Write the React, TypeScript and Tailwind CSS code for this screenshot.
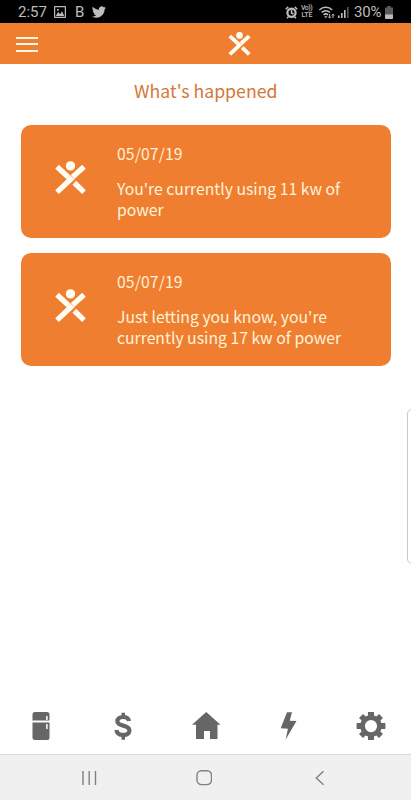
import type { ReactNode } from 'react'

interface Notice {
  date: string
  message: string
}

const notices: Notice[] = [
  { date: '05/07/19', message: "You're currently using 11 kw of power" },
  { date: '05/07/19', message: "Just letting you know, you're currently using 17 kw of power" },
]

function Logo({ className }: { className: string }) {
  return (
    <svg viewBox="0 0 93 100" className={className} fill="none" stroke="#fffdf3" strokeWidth="16">
      <circle cx="46.5" cy="14.5" r="14" fill="#fffdf3" stroke="none" />
      <path d="M6 17 47 54.5 6 93" />
      <path d="M87 17 53 48M87 93 58 65" />
    </svg>
  )
}

function StatusBar() {
  return (
    <div className="flex h-[23px] shrink-0 items-center bg-black pl-[18px] pr-[18px] pt-px text-[#bdbdbd]">
      <span className="w-[29px] whitespace-nowrap font-['Roboto'] text-[15px] leading-[22px]">2:57</span>
      <svg className="ml-[7px] h-3 w-3" viewBox="0 0 12 12">
        <path fill="currentColor" fillRule="evenodd" d="M1 0h10a1 1 0 0 1 1 1v10a1 1 0 0 1-1 1H1a1 1 0 0 1-1-1V1a1 1 0 0 1 1-1ZM1.2 1.2v9.6h9.6V1.2ZM1.8 10l2.4-4 2 2.2L8 5.2 10.3 10ZM3 3h1.8v1.6H3Z" />
      </svg>
      <span className="ml-[9px] w-[9px] font-['Roboto'] text-[15px] leading-[22px]">B</span>
      <svg className="ml-[8px] h-3.5 w-3.5" viewBox="0 0 24 24" fill="currentColor">
        <path d="M23.95 4.57a10 10 0 0 1-2.82.78 4.96 4.96 0 0 0 2.16-2.73c-.95.56-2 .96-3.13 1.19a4.92 4.92 0 0 0-8.38 4.48C7.69 8.1 4.07 6.13 1.64 3.16a4.93 4.93 0 0 0 1.52 6.57 4.9 4.9 0 0 1-2.23-.61v.06a4.92 4.92 0 0 0 3.95 4.83 5 5 0 0 1-2.21.08 4.94 4.94 0 0 0 4.6 3.42A9.87 9.87 0 0 1 0 19.54a13.99 13.99 0 0 0 7.55 2.21c9.05 0 14-7.5 14-13.98 0-.21 0-.42-.02-.63a9.9 9.9 0 0 0 2.46-2.55Z" />
      </svg>

      <svg className="ml-auto h-[13px] w-[13px]" viewBox="0 0 13 13" fill="none" stroke="currentColor">
        <circle cx="6.5" cy="6.7" r="4.1" strokeWidth="2.2" />
        <path strokeWidth="1.5" d="M6.5 4v3l2 1M.7 3.2 3.3.9M12.3 3.2 9.7.9M2 12.3l1.4-1.5M11 12.3l-1.4-1.5" />
      </svg>
      <div className="ml-[3px] w-3 text-center font-['Roboto'] text-[7px] font-medium leading-[7px]">
        <div className="-ml-px whitespace-nowrap tracking-[-0.5px]">Vo))</div>
        <div>LTE</div>
      </div>
      <svg className="ml-[6px] h-[13px] w-4" viewBox="0 0 16 13" fill="none" stroke="currentColor" strokeWidth="1.5">
        <path d="M.4 4a9 9 0 0 1 12.8 0M2.6 6.5a6 6 0 0 1 8.4 0M4.6 8.9a3.2 3.2 0 0 1 4.4 0" />
        <path fill="currentColor" stroke="none" d="M5.2 10.2h3.2L6.8 12.2Z" />
        <path strokeWidth="1" d="M10.6 8v4M9.4 10.7l1.2 1.4 1.2-1.4M14 12V8.2M12.8 9.5 14 8.1l1.2 1.4" />
      </svg>
      <svg className="ml-[3px] h-3 w-[11px]" viewBox="0 0 11 12" fill="currentColor">
        <path d="M0 9.5h1.6V12H0ZM3 7h1.6v5H3ZM6 4h1.6v8H6Z" />
        <path fill="#555" d="M9 1h1.6v11H9Z" />
      </svg>
      <span className="ml-[5px] w-[27px] whitespace-nowrap font-['Roboto'] text-[15px] leading-[22px] tracking-[-0.2px]">30%</span>
      <svg className="ml-[4px] h-[13px] w-[8px]" viewBox="0 0 8 13">
        <path fill="#5a5a5a" d="M2.2 0h3.6v1.5H8V9H0V1.5h2.2Z" />
        <path fill="#bdbdbd" d="M0 8.5h8V12a1 1 0 0 1-1 1H1a1 1 0 0 1-1-1Z" />
      </svg>
    </div>
  )
}

function Header() {
  return (
    <header className="flex h-[41px] shrink-0 items-center bg-[#ef7e31] pl-4">
      <button aria-label="Menu" className="mt-px flex w-[22px] flex-col gap-[4.5px]">
        <span className="h-0.5 bg-[#fff8e4]" />
        <span className="h-0.5 bg-[#fff8e4]" />
        <span className="h-0.5 bg-[#fff8e4]" />
      </button>
      <Logo className="ml-[190px] h-6 w-[23px]" />
    </header>
  )
}

function NoticeCard({ date, message }: Notice) {
  return (
    <article className="flex h-[113px] rounded-[10px] bg-[#ef7e31] font-['Noto_Sans_CJK_SC',sans-serif] text-[#fff3d8]">
      <Logo className="ml-[34.5px] mt-9 h-[33.5px] w-[31px] shrink-0" />
      <div className="ml-[31px] mt-[18px] w-[235px] text-[15.75px] leading-[21px]">
        <p className="tracking-[0.1px]">{date}</p>
        <p className="mt-3.5">{message}</p>
      </div>
    </article>
  )
}

function TabItem({ label, className, children }: { label: string; className: string; children: ReactNode }) {
  return (
    <button aria-label={label} className="flex flex-1 justify-center">
      <svg viewBox="0 0 30 30" className={className} fill="#666">
        {children}
      </svg>
    </button>
  )
}

function TabBar() {
  return (
    <nav className="flex h-[43px] shrink-0">
      <TabItem label="Appliances" className="h-[30px] w-[30px]">
        <path d="M9 1h12a2.5 2.5 0 0 1 2.5 2.5V9.5h-17V3.5A2.5 2.5 0 0 1 9 1ZM6.5 11.5h17v15a2.5 2.5 0 0 1-2.5 2.5H9A2.5 2.5 0 0 1 6.5 26.5Z" />
        <path fill="#eee" d="M20 5H21.7V9H20ZM20 13H21.7V18H20Z" />
      </TabItem>
      <TabItem label="Costs" className="h-[30px] w-[30px]">
        <path fill="none" stroke="#666" strokeWidth="4.2" d="M21 10C20.5 7 18.5 6 15.2 6c-3.8 0-5.8 1.7-5.8 4.2 0 6 12 2.8 12 9.2 0 3-2.3 4.5-6.2 4.5-4.2 0-6.4-1.7-6.8-5" />
        <path d="M13.5 1.8h3.5v5h-3.5ZM13.5 23.5h3.5v5.2h-3.5Z" />
      </TabItem>
      <TabItem label="Home" className="h-[30px] w-[30px]">
        <path d="M15.2 1 29.5 13.7H26.5V28H19V20h-6v8H5V13.7H1Z" />
      </TabItem>
      <TabItem label="Energy" className="h-[30px] w-[30px]">
        <path d="M14 1.2H19L16.7 9.7 23.5 10 12.7 28.5 14.9 17.7 7.7 17.2Z" />
      </TabItem>
      <TabItem label="Settings" className="ml-0.5 h-[30px] w-[30px]">
        <path
          fillRule="evenodd"
          d="M12 1h6v3.6l2.4 1 2.6-2.6 4 4-2.6 2.6 1 2.5h4v6h-4l-1 2.4 2.6 2.6-4 4-2.6-2.6-2.4 1V29h-6v-3.5l-2.4-1L7 27.1l-4-4 2.6-2.6-1-2.4H.6v-6h4l1-2.5L3 7l4-4 2.6 2.6 2.4-1ZM15 9a6.1 6.1 0 1 0 0 12.2A6.1 6.1 0 0 0 15 9Z"
        />
      </TabItem>
    </nav>
  )
}

function SystemNav() {
  return (
    <div className="flex h-[46px] shrink-0 items-center border-t border-[#dadada] bg-[#f0f0f0] pl-[81px] text-[#808080]">
      <svg className="h-4 w-4" viewBox="0 0 16 16" stroke="currentColor" strokeWidth="1.4">
        <path d="M2 1v14M8.2 1v14M14.5 1v14" />
      </svg>
      <svg className="ml-[99px] h-4 w-4" viewBox="0 0 16 16" fill="none" stroke="currentColor" strokeWidth="1.4">
        <rect x="1" y=".8" width="14.5" height="13.8" rx="4.5" />
      </svg>
      <svg className="ml-[103px] h-4 w-[9px]" viewBox="0 0 9 16" fill="none" stroke="currentColor" strokeWidth="1.4">
        <path d="M8.5 1.3 1.3 8l7.2 6.7" />
      </svg>
    </div>
  )
}

export default function App() {
  return (
    <div className="relative flex h-[800px] w-[411px] flex-col overflow-hidden bg-[#fefefe]">
      <StatusBar />
      <Header />
      <main className="flex-1 pl-[20.5px] pr-5">
        <h1 className="mt-3 text-center font-['Noto_Sans_CJK_SC',sans-serif] text-[17.7px] leading-7 text-[#d47837]">
          What's happened
        </h1>
        <div className="mt-[21px] flex flex-col gap-[15px]">
          {notices.map((notice) => (
            <NoticeCard key={notice.message} {...notice} />
          ))}
        </div>
      </main>
      {/* Edge panel handle over the page */}
      <div className="absolute -right-2 top-[409px] h-[155px] w-3 rounded-[5px] border border-[#c9c9c9] bg-white" />
      <TabBar />
      <SystemNav />
    </div>
  )
}
